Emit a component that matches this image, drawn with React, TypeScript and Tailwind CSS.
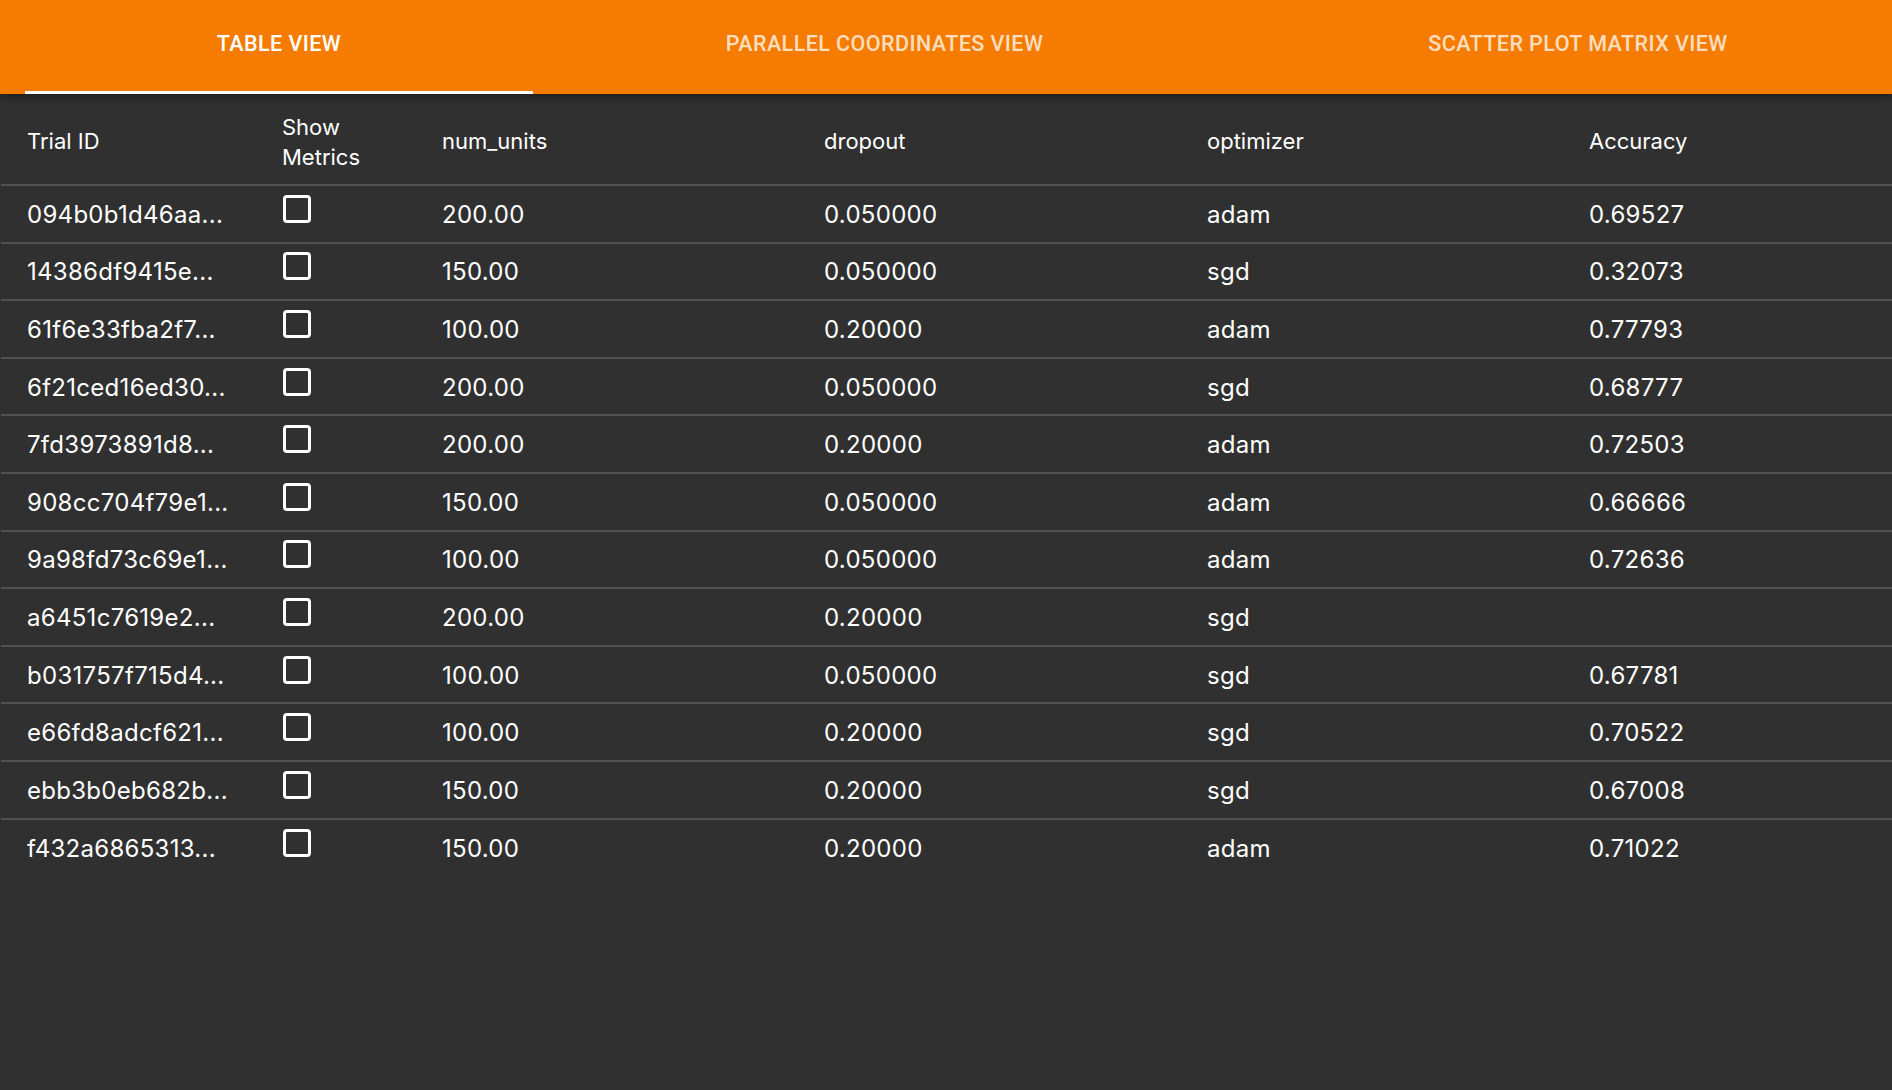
import React from "react";

const tabs = [
  { label: "TABLE VIEW", width: "w-[508px]", active: true },
  { label: "PARALLEL COORDINATES VIEW", width: "w-[703px]", active: false },
  { label: "SCATTER PLOT MATRIX VIEW", width: "w-[684px]", active: false },
];

const rows = [
  ["094b0b1d46aa...", "200.00", "0.050000", "adam", "0.69527"],
  ["14386df9415e...", "150.00", "0.050000", "sgd", "0.32073"],
  ["61f6e33fba2f7...", "100.00", "0.20000", "adam", "0.77793"],
  ["6f21ced16ed30...", "200.00", "0.050000", "sgd", "0.68777"],
  ["7fd3973891d8...", "200.00", "0.20000", "adam", "0.72503"],
  ["908cc704f79e1...", "150.00", "0.050000", "adam", "0.66666"],
  ["9a98fd73c69e1...", "100.00", "0.050000", "adam", "0.72636"],
  ["a6451c7619e2...", "200.00", "0.20000", "sgd", ""],
  ["b031757f715d4...", "100.00", "0.050000", "sgd", "0.67781"],
  ["e66fd8adcf621...", "100.00", "0.20000", "sgd", "0.70522"],
  ["ebb3b0eb682b...", "150.00", "0.20000", "sgd", "0.67008"],
  ["f432a6865313...", "150.00", "0.20000", "adam", "0.71022"],
];

const cols = "grid grid-cols-[257px_160px_382px_383px_382px_1fr]";

const Checkbox = () => (
  <div className="w-[28px] h-[28px] border-[3px] border-white rounded-[4px] -translate-y-[6px] ml-[1px]" />
);

const App = () => {
  return (
    <div className="min-h-screen w-full bg-[#303030] overflow-hidden font-['Inter',sans-serif] text-white">
      <div className="relative z-10 h-[94px] bg-[#f57c00] shadow-[0_3px_6px_rgba(0,0,0,0.35)] flex pl-[25px] overflow-hidden">
        {tabs.map((t) => (
          <div
            key={t.label}
            className={`${t.width} shrink-0 relative flex items-center justify-center pb-[5px] font-['Roboto',sans-serif] font-medium text-[21.5px] tracking-[0.02em] ${
              t.active ? "text-white" : "text-white/75"
            }`}
          >
            {t.label}
            {t.active && (
              <div className="absolute left-0 right-0 bottom-0 h-[3px] bg-white" />
            )}
          </div>
        ))}
      </div>

      <div className="pl-[1px]">
        <div className={`${cols} h-[92px] pt-[5px] items-center border-b-2 border-[#515151] text-[22px]`}>
          <div className="pl-[26px]">Trial ID</div>
          <div className="pl-6 leading-[30px]">
            Show
            <br />
            Metrics
          </div>
          <div className="pl-6">num_units</div>
          <div className="pl-6">dropout</div>
          <div className="pl-6">optimizer</div>
          <div className="pl-6">Accuracy</div>
        </div>

        {rows.map((r, i) => (
          <div
            key={r[0]}
            className={`${cols} h-[57.6px] pt-[2px] items-center text-[24px] tracking-[0.012em] ${
              i < rows.length - 1 ? "border-b-2 border-[#515151]" : ""
            }`}
          >
            <div className="pl-[26px]">{r[0]}</div>
            <div className="pl-6">
              <Checkbox />
            </div>
            <div className="pl-6">{r[1]}</div>
            <div className="pl-6">{r[2]}</div>
            <div className="pl-6">{r[3]}</div>
            <div className="pl-6">{r[4]}</div>
          </div>
        ))}
      </div>
    </div>
  );
};

export default App;
